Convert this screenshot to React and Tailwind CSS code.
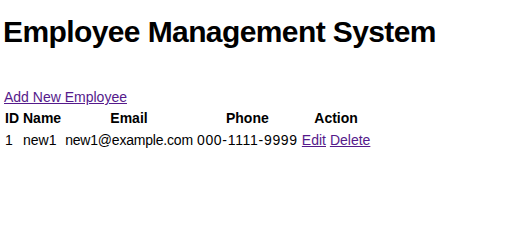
export default function App() {
  return (
    <div className="bg-white text-black text-[14px] pl-[4px]" style={{ fontFamily: '"Liberation Sans", Arial, sans-serif' }}>
      <h1 className="text-[30px] tracking-[-0.6px] font-bold mt-[17px] mb-[41px] leading-[30px] -ml-[1px]">Employee Management System</h1>
      <a href="#" className="text-[#551a8b] underline leading-[18px] block w-fit">Add New Employee</a>
      <table className="border-separate border-spacing-[2px] -ml-[2px] leading-[18px]">
        <thead>
          <tr>
            <th className="p-[1px] font-bold">ID</th>
            <th className="p-[1px] font-bold">Name</th>
            <th className="p-[1px] font-bold">Email</th>
            <th className="p-[1px] font-bold">Phone</th>
            <th className="p-[1px] font-bold">Action</th>
          </tr>
        </thead>
        <tbody>
          <tr>
            <td className="p-[1px]">1</td>
            <td className="p-[1px]">new1</td>
            <td className="p-[1px] tracking-[-0.2px]">new1@example.com</td>
            <td className="p-[1px] tracking-[0.7px]">000-1111-9999</td>
            <td className="p-[1px]">
              <a href="#" className="text-[#551a8b] underline">Edit</a>{" "}
              <a href="#" className="text-[#551a8b] underline">Delete</a>
            </td>
          </tr>
        </tbody>
      </table>
    </div>
  );
}
